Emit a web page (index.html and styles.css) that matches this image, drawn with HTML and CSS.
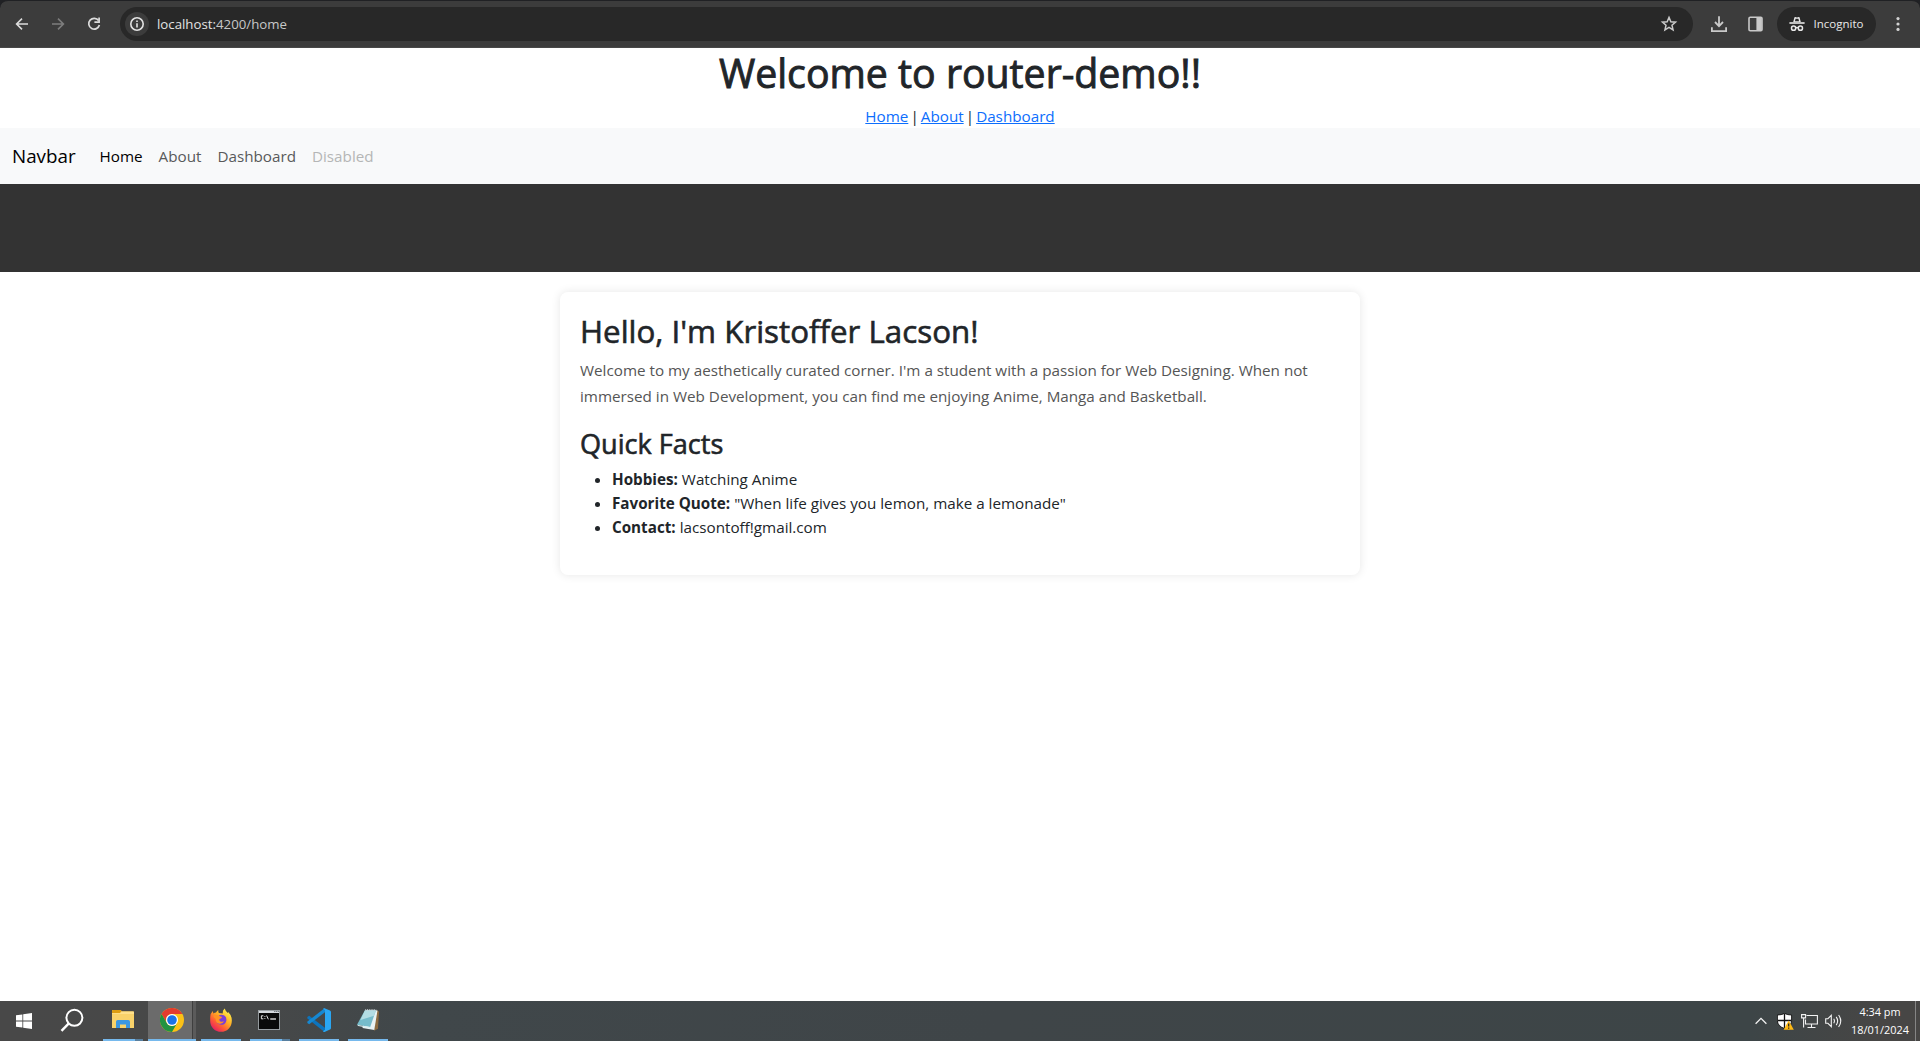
FILE: index.html
```
<!DOCTYPE html>
<html lang="en">
<head>
<meta charset="utf-8">
<title>RouterDemo</title>
<link rel="stylesheet" href="styles.css">
</head>
<body>
<div class="screen">
  <header class="toolbar">
    <div class="nav-buttons">
      <svg class="icon" width="16" height="16" viewBox="0 0 16 16" fill="none" stroke="#dcdcdc" stroke-width="1.6"><path d="M14 8H3M8 2.6 2.6 8 8 13.4"/></svg>
      <svg class="icon" width="16" height="16" viewBox="0 0 16 16" fill="none" stroke="#7d7d7d" stroke-width="1.6"><path d="M2 8h11M8 2.6 13.4 8 8 13.4"/></svg>
      <svg class="icon" width="16" height="16" viewBox="0 0 16 16" fill="none" stroke="#dcdcdc" stroke-width="1.7"><path d="M12.6 4.6A5.4 5.4 0 1 0 13.4 9"/><path d="M13.1 1.6v4.6H8.4"/></svg>
    </div>
    <div class="omnibox">
      <span class="site-info">
        <svg width="16" height="16" viewBox="0 0 16 16"><circle cx="8" cy="8" r="6.2" fill="none" stroke="#e3e3e3" stroke-width="1.6"/><path d="M7.2 7.2h1.6v4.2H7.2zM7.2 4.5h1.6v1.6H7.2z" fill="#e3e3e3"/></svg>
      </span>
      <span class="url"><span class="host">localhost:</span>4200/home</span>
      <svg class="star" width="18" height="18" viewBox="0 0 18 18" fill="none" stroke="#c9c9c9" stroke-width="1.5"><path d="m9 2.4 1.85 4.35 4.7.42-3.56 3.1 1.06 4.6L9 12.45l-4.05 2.42 1.06-4.6-3.56-3.1 4.7-.42z"/></svg>
    </div>
    <svg class="download" width="16" height="16" viewBox="0 0 16 16" fill="none" stroke="#c9c9c9" stroke-width="1.8"><path d="M8 .2v9.6M4 6l4 4.1L12 6M.9 11.2v3.9h14.2v-3.9"/></svg>
    <svg class="panel" width="15" height="16" viewBox="0 0 15 16"><rect x="1" y="1.3" width="13" height="13.4" rx="1.2" fill="none" stroke="#c9c9c9" stroke-width="1.6"/><path d="M8.4 1h5.4v14H8.4z" fill="#c9c9c9"/></svg>
    <div class="incognito">
      <svg width="16" height="16" viewBox="0 0 16 16"><path d="M4.2 6 5.4 1.4Q5.6.8 6.2 1L8 1.5 9.8 1q.6-.2.8.4L11.8 6z" fill="#e8e8e8"/><path d="M5.9 5.2 6.6 2.8h2.8l.7 2.4z" fill="#282828"/><path d="M.4 6.2h15.2v1.6H.4z" fill="#e8e8e8"/><g fill="none" stroke="#e8e8e8" stroke-width="1.5"><circle cx="4.6" cy="12.2" r="2.1"/><circle cx="11.4" cy="12.2" r="2.1"/><path d="M6.7 11.8q1.3-.8 2.6 0"/></g></svg>
      <span>Incognito</span>
    </div>
    <svg class="kebab" width="4" height="16" viewBox="0 0 4 16" fill="#d2d2d2"><circle cx="2" cy="2.6" r="1.6"/><circle cx="2" cy="8" r="1.6"/><circle cx="2" cy="13.4" r="1.6"/></svg>
  </header>

  <main class="page">
    <div class="welcome">
      <h1>Welcome to router-demo!!</h1>
      <nav class="links"><a href="#">Home</a> | <a href="#">About</a> | <a href="#">Dashboard</a></nav>
    </div>
    <nav class="navbar">
      <a class="brand">Navbar</a>
      <a class="nav-link current">Home</a>
      <a class="nav-link">About</a>
      <a class="nav-link">Dashboard</a>
      <a class="nav-link disabled">Disabled</a>
    </nav>
    <div class="banner"></div>
    <section class="card">
      <h2>Hello, I'm Kristoffer Lacson!</h2>
      <p>Welcome to my aesthetically curated corner. I'm a student with a passion for Web Designing. When not<br>immersed in Web Development, you can find me enjoying Anime, Manga and Basketball.</p>
      <h3>Quick Facts</h3>
      <ul>
        <li><strong>Hobbies:</strong> Watching Anime</li>
        <li><strong>Favorite Quote:</strong> "When life gives you lemon, make a lemonade"</li>
        <li><strong>Contact:</strong> lacsontoff!gmail.com</li>
      </ul>
    </section>
  </main>

  <footer class="taskbar">
    <div class="cell start">
      <svg width="16" height="16" viewBox="0 0 16 16" fill="#fff"><path d="M0 2.3 6.4 1.4v6.2H0zM7.2 1.3 16 0v7.6H7.2zM0 8.4h6.4v6.2L0 13.7zM7.2 8.4H16V16l-8.8-1.3z"/></svg>
    </div>
    <div class="cell search">
      <svg width="24" height="24" viewBox="0 0 24 24" fill="none" stroke="#fff" stroke-width="2"><circle cx="14.4" cy="9.8" r="8"/><path d="M8.8 15.4 1.5 22.8" stroke-width="2.4"/></svg>
    </div>
    <div class="app stacked explorer">
      <svg width="22" height="20" viewBox="0 0 22 20"><path d="M0 1q0-1 1-1h7.5l1.2 1.2H21q1 0 1 1V18H0z" fill="#f9d26a"/><path d="M0 1q0-1 1-1h7.6q.8 0 .8 1L8 3H0z" fill="#dd9d11"/><path d="M0 3.2h8.2L9.7 1.7H22V4H0z" fill="#ffe08a"/><path d="M4 18v-6.3q0-1.7 1.7-1.7h10.6q1.7 0 1.7 1.7V18h-4v-3.6H8V18z" fill="#3b97e3"/></svg>
    </div>
    <div class="app chrome">
      <svg width="24" height="24" viewBox="0 0 24 24"><circle cx="12" cy="12" r="12" fill="#fbc116"/><path d="M1.6 6A12 12 0 0 1 22.4 6H12a6 6 0 0 0-5.2 9z" fill="#e33b2e"/><path d="M1.6 6A12 12 0 0 0 12 24l5.2-9A6 6 0 0 1 6.8 15z" fill="#229342"/><circle cx="12" cy="12" r="6" fill="#fff"/><circle cx="12" cy="12" r="4.8" fill="#1a73e8"/></svg>
    </div>
    <div class="app firefox">
      <svg width="24" height="24" viewBox="0 0 24 24">
        <defs>
          <linearGradient id="fx" x1=".85" y1=".1" x2=".2" y2=".95"><stop offset="0" stop-color="#fff04a"/><stop offset=".4" stop-color="#ffab25"/><stop offset=".7" stop-color="#ff5a36"/><stop offset="1" stop-color="#e61e63"/></linearGradient>
        </defs>
        <path d="M1.2 9Q1.4 5.2 3.8 3l.6 2.6Q5.6 4.6 7 4.6 8 2.6 9.4 2q-.4 1.6.5 3l4 .6Q13.200 2.600 15.700.4q.8 3 3.400 4.900l-.1-1.500Q23.200 8 22.800 13A10.800 10.800 0 0 1 1.200 13z" fill="url(#fx)"/>
        <path d="M8.600 9.200Q10.800 5.500 14.900 7.300 18 9 17.300 12.900 16 17 12 16.800 7.700 16.400 7 12.600L9.700 11z" fill="#7a3fd8"/>
        <path d="M4.300 8.600q3-2.200 6.100-.6l2.700 1q-.3 1.500-2.600 1.900-.6 1.700.9 2.600 1.900.8 3.700-.5-1.200 3.300-4.900 2.700Q6.400 14.900 6.800 11z" fill="#ff9224"/>
      </svg>
    </div>
    <div class="app stacked cmd">
      <svg width="22" height="20" viewBox="0 0 23 20" preserveAspectRatio="none"><rect x=".5" y=".5" width="22" height="19" fill="#0a0a0a" stroke="#9aa0a4"/><path d="M1 1h21v2H1z" fill="#d6dade"/><path d="M17 1.500h1.200M19 1.500h1.200M20.800 1.500h1" stroke="#5a6268"/><path d="M5.600 5.800H3.500v3h2.100M7.200 6v.9M7.200 8v.9M9 5.500l1.800 3.800" fill="none" stroke="#e8e8e8" stroke-width="1"/><path d="M12.800 9h6" stroke="#fff" stroke-width="1.200"/></svg>
    </div>
    <div class="app vscode">
      <svg width="24" height="24" viewBox="0 0 24 24"><path d="M.3 9.100 2.200 7.800 18.600 20.200 17.500 24 .4 10.400z" fill="#0d74bd"/><path d="M.3 14.900 2.200 16.200 18.600 3.800 17.500.2.4 13.600z" fill="#1688d2"/><path d="M17.500.2 23 2.500q1 .5 1 1.500v16q0 1-1 1.500L17.500 24q-.9.2-1.500-.8l2-1.500V2.300L16 .8q.6-.9 1.500-.6z" fill="#2aa6f2"/></svg>
    </div>
    <div class="app notepad">
      <svg width="24" height="24" viewBox="0 0 24 24"><path d="m20 2 3 1.500-1 17.200-4 2z" fill="#8c6b41"/><path d="m10 2 11.500.4L18.300 22 6.500 20z" fill="#e9f3f4"/><path d="M8.800 2.400 20 2.200 14.200 18.900 1 16.800z" fill="#76bccb"/><path d="M8.800 2.400 20 2.200l-2 5.600L4.500 12z" fill="#b3dde4"/><path d="m1 16.800 13.200 2.100.8 1.700L2.200 18z" fill="#d8edf0"/><path d="M9.200 2h11" stroke="#cfd8da" stroke-width="1.300" stroke-dasharray="1 .8"/></svg>
    </div>
    <div class="tray">
      <svg width="12" height="8" viewBox="0 0 12 8" fill="none" stroke="#f2f2f2" stroke-width="1.300"><path d="m.6 6.800 5.400-5.400 5.400 5.400"/></svg>
      <svg class="shield" width="17" height="17" viewBox="0 0 17 17"><path d="M7.500.4Q10.500 2 14.600 2v5.600q0 5.400-7.100 8-7.100-2.600-7.100-8V2Q4.500 2 7.500.4z" fill="#fff" stroke="#111" stroke-width=".9"/><path d="M7.500.8v14.600M.6 7.500h14" stroke="#111" stroke-width="1.300"/><path d="m11.700 7.400 5.100 9.300H6.600z" fill="#ffb914"/><path d="M11.700 10.400v3.200M11.700 14.500v1.300" stroke="#222" stroke-width="1.200"/></svg>
      <svg class="network" width="17" height="16" viewBox="0 0 17 16" fill="none" stroke="#f2f2f2" stroke-width="1.100"><path d="M5.500 2.500h10.900v8.500H4.500V6.500"/><path d="M.6 1.600h4v3.300h-4zM2.600 4.900v9.500M10.500 11v3.500M6.500 14.500h8"/></svg>
      <svg class="speaker" width="17" height="14" viewBox="0 0 17 14" fill="none" stroke="#f2f2f2" stroke-width="1.100"><path d="M.7 4.700h2.200l3.400-3.300v11.200L2.900 9.300H.7z"/><path d="M8.700 4.700q1.500 2.300 0 4.600M11.200 2.900q2.900 4.100 0 8.200M13.600 1q4.300 6 0 12"/></svg>
      <div class="clock"><span>4:34 pm</span><span>18/01/2024</span></div>
    </div>
  </footer>
</div>
</body>
</html>
```
FILE: styles.css
```
* { box-sizing: border-box; }

body {
  margin: 0;
  background: #fff;
  color: #212529;
  font: 400 15.22px/24px "Open Sans", "Noto Sans", sans-serif;
}

svg { display: block; flex: none; }

.screen {
  display: flex;
  flex-direction: column;
  height: 1041px;
  overflow: hidden;
}

/* Browser toolbar */
.toolbar {
  display: flex;
  align-items: center;
  flex: none;
  height: 48px;
  padding: 0 20px 0 14px;
  background: #3c3c3c;
  border-top: 1px solid #202124;
  border-bottom: 1px solid #484848;
  border-radius: 8px 8px 0 0;
  box-shadow: 0 -8px 0 8px #202124;
  clip-path: inset(0);
}

.nav-buttons {
  display: flex;
  gap: 20px;
  width: 106px;
}

.omnibox {
  display: flex;
  align-items: center;
  width: 1573px;
  height: 34px;
  padding: 0 15px 0 5px;
  border-radius: 17px;
  background: #282828;
}

.site-info {
  display: grid;
  place-items: center;
  width: 24px;
  height: 24px;
  margin-right: 8px;
  border-radius: 50%;
  background: #3c3c3c;
}

.url {
  font-size: 13.25px;
  color: #c7c7c7;
}

.host { color: #e3e3e3; }

.star { margin-left: auto; }

.download { margin-left: 18px; }

.panel { margin-left: 20.5px; }

.incognito {
  display: flex;
  align-items: center;
  gap: 8.5px;
  width: 99px;
  height: 34px;
  margin-left: 14.5px;
  padding-left: 12px;
  border-radius: 17px;
  background: #282828;
  color: #e8e8e8;
  font-size: 11.5px;
}

.kebab { margin-left: 20px; }

/* Page */
.page {
  flex: 1;
  background: #fff;
}

.welcome { text-align: center; }

h1, h2, h3 {
  margin: 0 0 8px;
  font-weight: 500;
  -webkit-text-stroke: 0.6px currentColor;
}

h1 {
  padding-top: 2px;
  font-size: 39.25px;
  line-height: 46px;
  -webkit-text-stroke-width: 0.9px;
}

.links { word-spacing: -1.9px; }

.links a { color: #0d6efd; }

.navbar {
  display: flex;
  align-items: center;
  height: 56px;
  padding: 0 12px;
  background: #f8f9fa;
}

.brand {
  margin-right: 16px;
  color: #000;
  font-size: 18.8px;
}

.nav-link {
  padding: 8px;
  color: #595a5a;
}

.current { color: #000; }

.disabled { color: #b5b6b6; }

.banner {
  height: 88px;
  background: #333;
}

.card {
  width: 800px;
  height: 283px;
  margin: 20px auto;
  padding: 20px;
  border-radius: 8px;
  background: #fff;
  box-shadow: 0 0 10px rgba(0, 0, 0, 0.1);
}

h2 {
  padding-top: 1px;
  font-size: 31.3px;
  line-height: 37.4px;
}

.card p {
  margin: 0 0 16px;
  color: #555;
  line-height: 25.6px;
  white-space: nowrap;
}

h3 {
  padding-top: 2px;
  font-size: 27.1px;
  line-height: 31.6px;
}

.card ul {
  margin: 0;
  padding-left: 32px;
}

/* Taskbar */
.taskbar {
  display: flex;
  flex: none;
  height: 40px;
  background: linear-gradient(90deg, #484848 0, #474848 240px, #40474a 420px, #3f4548 1000px, #3d4547 1750px, #474645 1880px, #474645 100%);
}

.cell {
  display: grid;
  place-items: center;
  width: 48px;
}

.search {
  width: 49px;
  padding: 0 2px 2px 0;
}

.app {
  display: grid;
  place-items: center;
  width: 40px;
  margin-left: 9px;
  border-bottom: 2px solid #76b9ed;
}

.explorer {
  margin-left: 6px;
}

.stacked {
  border-image: linear-gradient(90deg, #76b9ed 31px, #587f9f 31px) 2;
}

.taskbar .chrome {
  width: 48px;
  margin-left: 5px;
  background: linear-gradient(90deg, #6b6b6b 44px, #3f3f3f 44px, #3f3f3f 45px, #5b5b5b 45px);
}

.firefox { margin-left: 5px; }

.cmd { padding-right: 2px; }

.tray {
  display: flex;
  align-items: center;
  margin-left: auto;
  margin-right: 4px;
  padding-right: 6px;
  border-right: 1px solid #858585;
}

.shield { margin-left: 10px; }

.network { margin-left: 7px; }

.speaker { margin-left: 7px; }

.clock {
  display: flex;
  flex-direction: column;
  width: 58px;
  margin-left: 9px;
  padding-bottom: 1px;
  color: #fff;
  font-size: 10.9px;
  line-height: 18px;
  text-align: center;
}
```
